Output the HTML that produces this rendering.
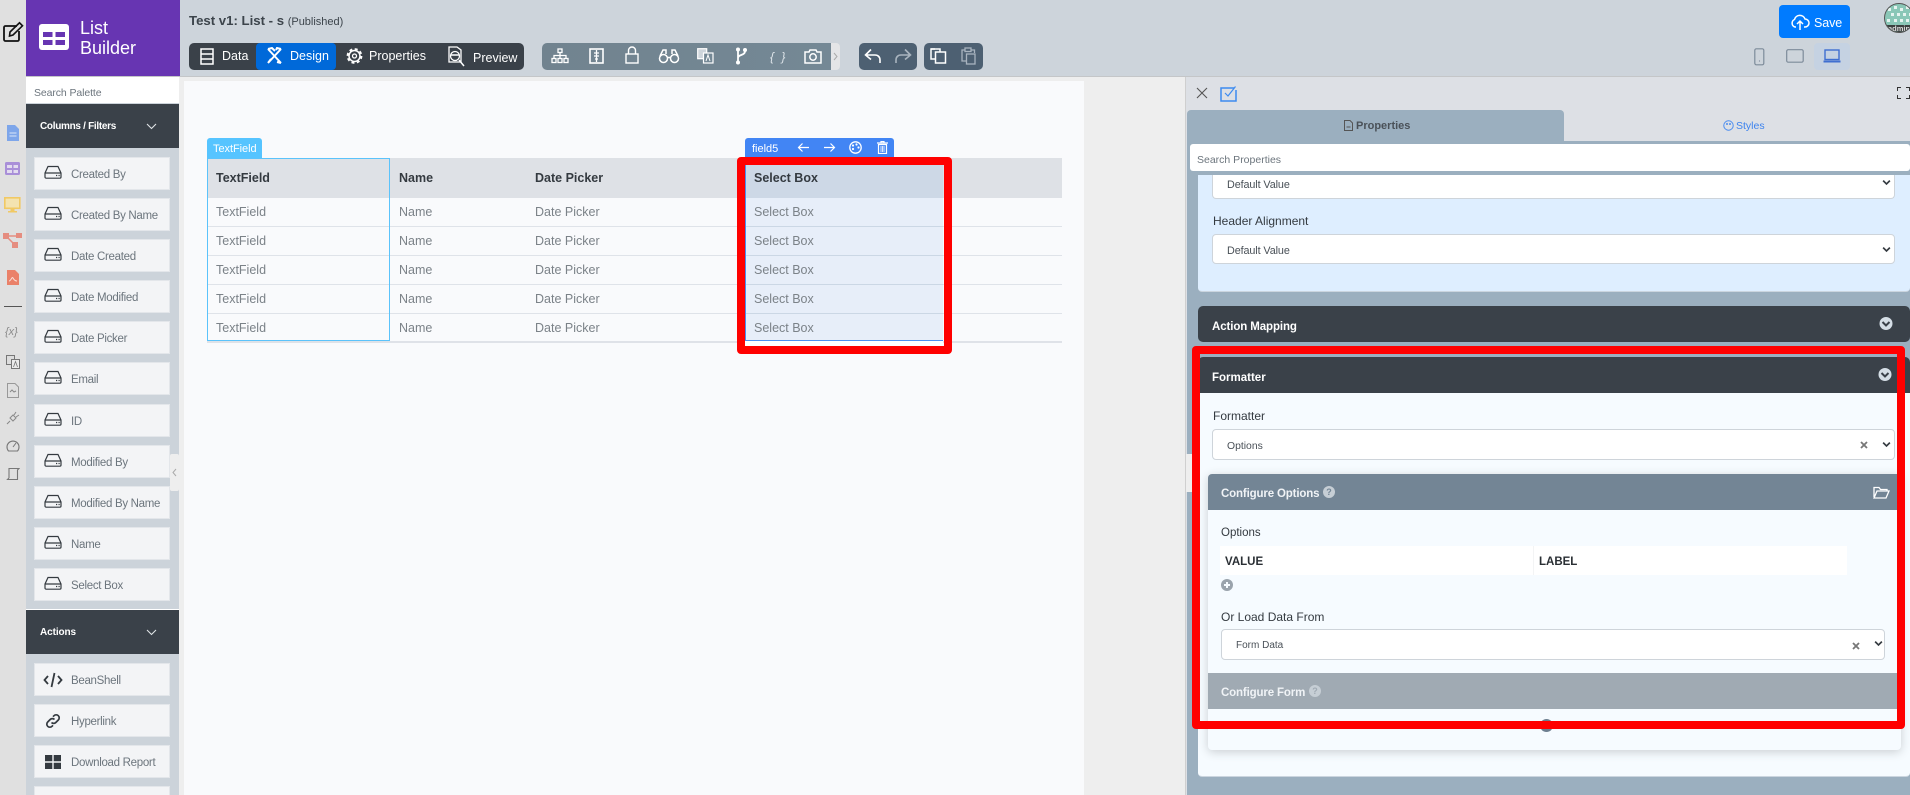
<!DOCTYPE html>
<html><head><meta charset="utf-8"><title>List Builder</title>
<style>
*{box-sizing:border-box}
html,body{margin:0;padding:0;width:1910px;height:795px;overflow:hidden;background:#eee;font-family:"Liberation Sans",sans-serif}
#w{position:relative;width:1910px;height:795px;overflow:hidden;background:#eee}
.a{position:absolute}
.t{position:absolute;white-space:nowrap;line-height:20px;height:20px}
.pi{position:absolute;left:34px;width:136px;height:33px;background:#f3f4f6;border:1px solid #e3e6ea}
.pi span{position:absolute;left:36px;top:8px;font-size:11.5px;letter-spacing:-.3px;line-height:18px;color:#6c757d;white-space:nowrap}
.pi svg{position:absolute;left:9px;top:7px}
.h{font-size:12.5px;font-weight:bold;color:#343a40}
.c{font-size:12.5px;color:#7b8288}
.line{position:absolute;height:1px;background:#dfe3e9}
.sel{position:absolute;background:#fff;border:1px solid #ced4da;border-radius:4px}
.sel span{position:absolute;font-size:10px;color:#495057;white-space:nowrap;line-height:14px}
svg{display:block}
</style></head>
<body>
<div id="w">
<svg width="0" height="0" style="position:absolute"><defs>
<symbol id="drv" viewBox="0 0 18 14"><path d="M1 8 L4 1.5 H14 L17 8 V12 a1.2 1.2 0 0 1-1.2 1.2 H2.2 A1.2 1.2 0 0 1 1 12Z M1 8H17" fill="none" stroke="#343a40" stroke-width="1.2"/><path d="M12 10.5h1.2M14.5 10.5h1.2" stroke="#343a40" stroke-width="1.2"/></symbol>
<symbol id="chv" viewBox="0 0 12 8"><path d="M1.5 1.5 L6 6 L10.5 1.5" fill="none" stroke="#343a40" stroke-width="2.2"/></symbol>
</defs></svg>

<!-- left rail -->
<div class="a" style="left:0;top:0;width:26px;height:795px;background:#e0e0e0"></div>
<svg class="a" style="left:2px;top:21px" width="22" height="22" viewBox="0 0 22 22"><path d="M15 5H3.5A1.5 1.5 0 0 0 2 6.5V18.5A1.5 1.5 0 0 0 3.5 20H15.5A1.5 1.5 0 0 0 17 18.5V10" fill="none" stroke="#111" stroke-width="1.8"/><path d="M8 11 L17.5 1.8 L20.5 4.8 L11 14 L7.5 15Z" fill="none" stroke="#111" stroke-width="1.6"/></svg>
<svg class="a" style="left:6px;top:125px" width="14" height="16" viewBox="0 0 14 16"><path d="M1 0H9L13 4V16H1Z" fill="#7ea6ea"/><path d="M3.5 8H10.5M3.5 11H10.5" stroke="#dbe6f8"/></svg>
<svg class="a" style="left:5px;top:162px" width="15" height="14" viewBox="0 0 15 14"><rect width="15" height="13" rx="1.5" fill="#a98fd8"/><path d="M2 3H7V6H2ZM8.5 3H13V6H8.5ZM2 8H7V11H2ZM8.5 8H13V11H8.5Z" fill="#e3dcef"/></svg>
<svg class="a" style="left:4px;top:197px" width="17" height="16" viewBox="0 0 17 16"><rect x=".8" y=".8" width="15" height="10.5" fill="#f4e3b0" stroke="#f1c964" stroke-width="1.6"/><path d="M6.5 12H10.5V14H13V15.5H4V14H6.5Z" fill="#f1c964"/></svg>
<svg class="a" style="left:3px;top:232px" width="19" height="17" viewBox="0 0 19 17"><path d="M3 4H15M4 5L11 12" stroke="#e58d80" stroke-width="1.5"/><rect x="0" y="1" width="6" height="6" fill="#e58d80"/><rect x="13" y="1" width="6" height="5" fill="#e58d80"/><rect x="9" y="10" width="6" height="6" fill="#e58d80"/></svg>
<svg class="a" style="left:7px;top:270px" width="12" height="15" viewBox="0 0 12 15"><path d="M0 0H8L12 4V15H0Z" fill="#ea8169"/><path d="M2 11 C4 11 5 6 6 8 C7 10 8 11 10 11" stroke="#fbe0d8" fill="none"/></svg>
<div class="a" style="left:4px;top:306px;width:18px;height:1px;background:#555"></div>
<div class="t" style="left:5px;top:322px;font-size:11px;font-style:italic;color:#8a8a8a">{x}</div>
<svg class="a" style="left:6px;top:355px" width="14" height="14" viewBox="0 0 14 14"><rect x=".5" y=".5" width="8" height="9" fill="#ddd" stroke="#777"/><rect x="5.5" y="4.5" width="8" height="9" fill="#ececec" stroke="#777"/><path d="M7.5 12L9.5 6.500L11.5 12" stroke="#777" fill="none" stroke-width=".8"/></svg>
<svg class="a" style="left:7px;top:383px" width="12" height="15" viewBox="0 0 12 15"><path d="M.5.5H8L11.5 4V14.5H.5Z" fill="none" stroke="#999"/><path d="M3 9L5 7L7 9L9 8" stroke="#888" fill="none"/></svg>
<svg class="a" style="left:6px;top:411px" width="14" height="14" viewBox="0 0 14 14"><path d="M1 13L4 10M4 7L7 10L10 7L7 4ZM8 4L10 1M10 6L13 4" stroke="#888" fill="none"/></svg>
<svg class="a" style="left:6px;top:439px" width="14" height="13" viewBox="0 0 14 13"><path d="M2.5 12A6 6 0 1 1 11.5 12Z" fill="none" stroke="#777" stroke-width="1.1"/><path d="M7 8L10 4" stroke="#777"/></svg>
<svg class="a" style="left:6px;top:467px" width="14" height="14" viewBox="0 0 14 14"><path d="M3 11V1.5H13L11.5 3V12.5H1.5L3 11" fill="none" stroke="#777" stroke-width="1.1"/></svg>

<!-- topbar -->
<div class="a" style="left:26px;top:0;width:1884px;height:77px;background:#cdd4db;border-bottom:1px solid #c4c6c8"></div>
<div class="a" style="left:26px;top:0;width:154px;height:76px;background:#6735b2"></div>
<svg class="a" style="left:39px;top:24px" width="30" height="26" viewBox="0 0 30 26"><rect width="30" height="26" rx="3" fill="#fff"/><path d="M4 8H13.5V13H4ZM16.5 8H26V13H16.5ZM4 16H13.5V21H4ZM16.5 16H26V21H16.5Z" fill="#6735b2"/></svg>
<div class="t" style="left:80px;top:18px;font-size:18px;color:#fff">List</div>
<div class="t" style="left:80px;top:38px;font-size:18px;color:#fff">Builder</div>

<div class="t" style="left:189px;top:11px;font-size:13.2px;font-weight:bold;color:#3c444b">Test v1: List - s <span style="font-weight:normal;font-size:11px">(Published)</span></div>

<div class="a" style="left:189px;top:43px;width:335px;height:27px;background:#3a4149;border-radius:5px"></div>
<div class="a" style="left:256px;top:43px;width:80px;height:27px;background:#0069d9;border-radius:4px"></div>
<svg class="a" style="left:200px;top:48px" width="14" height="17" viewBox="0 0 14 17"><rect x="1" y="1" width="12" height="15" fill="none" stroke="#fff" stroke-width="1.5"/><path d="M1 6H13M1 11H13" stroke="#fff" stroke-width="1.5"/></svg>
<div class="t" style="left:222px;top:46px;font-size:12.5px;color:#fff">Data</div>
<svg class="a" style="left:266px;top:47px" width="17" height="18" viewBox="0 0 17 18"><path d="M2 2L15 16M15 2L2 16M2 2L6 1L9 4M15 2L11 1L10 3M2 16L5 12M15 16L11 15" fill="none" stroke="#fff" stroke-width="2"/></svg>
<div class="t" style="left:290px;top:46px;font-size:12.5px;color:#fff">Design</div>
<svg class="a" style="left:346px;top:47px" width="17" height="18" viewBox="0 0 17 18"><circle cx="8.5" cy="9" r="5.5" fill="none" stroke="#fff" stroke-width="1.5"/><circle cx="8.5" cy="9" r="2" fill="none" stroke="#fff" stroke-width="1.3"/><circle cx="8.5" cy="9" r="7" fill="none" stroke="#fff" stroke-width="1.8" stroke-dasharray="3 2.5"/></svg>
<div class="t" style="left:369px;top:46px;font-size:12.5px;color:#fff">Properties</div>
<svg class="a" style="left:448px;top:46px" width="18" height="21" viewBox="0 0 18 21"><path d="M1 1H9L13 4V16H1Z" fill="none" stroke="#fff" stroke-width="1.3"/><ellipse cx="7" cy="10" rx="4.5" ry="4.5" fill="none" stroke="#fff" stroke-width="1.3"/><path d="M3 9H11M11 14L16 20" stroke="#fff" stroke-width="1.5"/></svg>
<div class="t" style="left:473px;top:48px;font-size:12.5px;color:#fff">Preview</div>

<div class="a" style="left:542px;top:43px;width:289px;height:27px;background:linear-gradient(90deg,#71838f,#748895);border-radius:5px 0 0 5px"></div>
<div class="a" style="left:831px;top:43px;width:9px;height:27px;background:#e4e5e7;border-radius:0 4px 4px 0"></div>
<svg class="a" style="left:833px;top:52px" width="5" height="9" viewBox="0 0 5 9"><path d="M1 1L4 4.5L1 8" stroke="#aaa" fill="none"/></svg>
<svg class="a" style="left:551px;top:48px" width="18" height="16" viewBox="0 0 18 16"><g fill="none" stroke="#fff" stroke-width="1.3"><rect x="7" y="1" width="4" height="3.5"/><rect x="1" y="10.5" width="4" height="4"/><rect x="7" y="10.5" width="4" height="4"/><rect x="13" y="10.5" width="4" height="4"/><path d="M9 4.5V10.5M3 10.5V7.5H15V10.5"/></g></svg>
<svg class="a" style="left:589px;top:48px" width="15" height="16" viewBox="0 0 15 16"><rect x="1" y="1" width="13" height="14" fill="none" stroke="#fff" stroke-width="1.6"/><path d="M7.5 2V14M5 5H10M5 8H10M6 11H9" stroke="#fff" stroke-width="1.3"/></svg>
<svg class="a" style="left:625px;top:46px" width="14" height="18" viewBox="0 0 14 18"><rect x="1" y="8" width="12" height="9" fill="none" stroke="#fff" stroke-width="1.4"/><path d="M3.5 8V4.5a3.5 3.5 0 0 1 7 0V8" fill="none" stroke="#fff" stroke-width="1.4"/></svg>
<svg class="a" style="left:658px;top:48px" width="22" height="16" viewBox="0 0 22 16"><g fill="none" stroke="#fff" stroke-width="1.5"><circle cx="5.5" cy="10.5" r="4"/><circle cx="16.5" cy="10.5" r="4"/><path d="M9 9.500H13M2 8L5 2H8V6M20 8L17 2H14V6"/></g></svg>
<svg class="a" style="left:697px;top:48px" width="17" height="16" viewBox="0 0 17 16"><rect x=".7" y=".7" width="9" height="10" fill="#cfd6dc" stroke="#fff" stroke-width="1.2"/><rect x="6.5" y="5" width="9.5" height="10" fill="#748895" stroke="#fff" stroke-width="1.2"/><path d="M9 13L11 7L13 13" stroke="#fff" fill="none"/></svg>
<svg class="a" style="left:735px;top:47px" width="13" height="18" viewBox="0 0 13 18"><g fill="none" stroke="#fff" stroke-width="1.8"><path d="M3 3V15M3 11C3 7 10 9 10 4"/></g><circle cx="3" cy="2.5" r="2" fill="#fff"/><circle cx="3" cy="15.5" r="2" fill="#fff"/><circle cx="10" cy="3" r="2" fill="#fff"/></svg>
<div class="t" style="left:770px;top:47px;font-size:12px;font-style:italic;color:#dfe5ea;letter-spacing:2px">{ }</div>
<svg class="a" style="left:804px;top:49px" width="18" height="15" viewBox="0 0 18 15"><path d="M1 3H5L6 1H12L13 3H17V14H1Z" fill="none" stroke="#fff" stroke-width="1.5"/><circle cx="9" cy="8" r="3.2" fill="none" stroke="#fff" stroke-width="1.5"/></svg>

<div class="a" style="left:859px;top:43px;width:58px;height:27px;background:#4d6072;border-radius:5px"></div>
<svg class="a" style="left:864px;top:48px" width="18" height="16" viewBox="0 0 18 16"><path d="M7 1.5L1.5 7L7 11.5M1.5 7H11C14 7 16 9 16 12V15" fill="none" stroke="#fff" stroke-width="1.6"/></svg>
<svg class="a" style="left:894px;top:48px" width="18" height="16" viewBox="0 0 18 16"><path d="M11 1.5L16.5 7L11 11.5M16.5 7H7C4 7 2 9 2 12V15" fill="none" stroke="#a9b4bf" stroke-width="1.6"/></svg>
<div class="a" style="left:924px;top:43px;width:59px;height:27px;background:#4d6072;border-radius:5px"></div>
<svg class="a" style="left:930px;top:48px" width="17" height="16" viewBox="0 0 17 16"><path d="M5 1H1V11H5" fill="none" stroke="#fff" stroke-width="1.5"/><path d="M1 1H10V4" fill="none" stroke="#fff" stroke-width="1.5"/><rect x="5.5" y="4" width="10" height="11" fill="none" stroke="#fff" stroke-width="1.5"/></svg>
<svg class="a" style="left:961px;top:47px" width="15" height="18" viewBox="0 0 15 18"><path d="M4 3H1V14H5M10 3H13.5V6" fill="none" stroke="#a9b4bf" stroke-width="1.3"/><rect x="4" y="1" width="6" height="3.5" fill="none" stroke="#a9b4bf" stroke-width="1.3"/><rect x="5.5" y="7" width="8.5" height="10" fill="none" stroke="#a9b4bf" stroke-width="1.3"/></svg>

<div class="a" style="left:1779px;top:5px;width:71px;height:33px;background:#007bff;border-radius:4px"></div>
<svg class="a" style="left:1790px;top:14px" width="20" height="17" viewBox="0 0 20 17"><path d="M6 13H5A4 4 0 0 1 4.5 5.5 A5.5 5.5 0 0 1 15 5 A4 4 0 0 1 15 13H14M10 16V7M7 10L10 7L13 10" fill="none" stroke="#fff" stroke-width="1.5"/></svg>
<div class="t" style="left:1814px;top:13px;font-size:12.5px;letter-spacing:-.1px;color:#fff">Save</div>
<div class="a" style="left:1884px;top:3px;width:30px;height:30px;border-radius:50%;overflow:hidden;background:#8ac7b7;border:1px solid #555">
<svg class="a" style="left:0;top:0" width="30" height="22" viewBox="0 0 30 22"><path d="M3 4h3v3h-3zM9 2h3v3h-3zM15 4h3v3h-3zM21 2h3v3h-3zM6 9h3v3h-3zM12 9h3v3h-3zM18 9h3v3h-3zM24 9h3v3h-3zM2 15h3v3h-3zM9 15h3v3h-3zM15 15h3v3h-3zM21 15h3v3h-3z" fill="#e6f3ef"/></svg>
<div class="a" style="left:0;top:21px;width:30px;height:9px;background:#3a3f3e"></div>
<div class="t" style="left:3px;top:15px;font-size:7.5px;font-weight:bold;color:#ddd">admin</div>
</div>
<svg class="a" style="left:1754px;top:48px" width="11" height="18" viewBox="0 0 11 18"><rect x=".8" y=".8" width="9" height="16" rx="1.5" fill="none" stroke="#7d8b9a" stroke-width="1.2"/><circle cx="5.5" cy="13" r=".6" fill="#7d8b9a"/></svg>
<svg class="a" style="left:1786px;top:49px" width="18" height="14" viewBox="0 0 18 14"><rect x=".7" y=".7" width="16.5" height="12.5" rx="1.5" fill="none" stroke="#7d8b9a" stroke-width="1.2"/></svg>
<div class="a" style="left:1814px;top:43px;width:36px;height:27px;background:#c5d2e2;border-radius:4px"></div>
<svg class="a" style="left:1823px;top:49px" width="18" height="14" viewBox="0 0 18 14"><rect x="2" y="1" width="14" height="9.5" fill="none" stroke="#3f6fd0" stroke-width="1.4"/><path d="M.5 12.5H17.5" stroke="#3f6fd0" stroke-width="2"/></svg>

<!-- palette -->
<div class="a" style="left:26px;top:77px;width:153px;height:718px;background:#ccd3da"></div>
<div class="a" style="left:26px;top:77px;width:153px;height:26px;background:#fff"></div>
<div class="t" style="left:34px;top:83px;font-size:10.5px;letter-spacing:-.1px;color:#6c757d">Search Palette</div>
<div class="a" style="left:26px;top:104px;width:153px;height:44px;background:#3a4149"></div>
<div class="t" style="left:40px;top:117px;font-size:10px;letter-spacing:-.3px;font-weight:bold;color:#fff">Columns / Filters</div>
<svg class="a" style="left:146px;top:123px" width="11" height="7" viewBox="0 0 11 7"><path d="M1 1L5.5 5.5L10 1" fill="none" stroke="#dfe3e6" stroke-width="1.1"/></svg>

<div class="pi" style="top:157px"><svg width="18" height="14"><use href="#drv"/></svg><span>Created By</span></div>
<div class="pi" style="top:198px"><svg width="18" height="14"><use href="#drv"/></svg><span>Created By Name</span></div>
<div class="pi" style="top:239px"><svg width="18" height="14"><use href="#drv"/></svg><span>Date Created</span></div>
<div class="pi" style="top:280px"><svg width="18" height="14"><use href="#drv"/></svg><span>Date Modified</span></div>
<div class="pi" style="top:321px"><svg width="18" height="14"><use href="#drv"/></svg><span>Date Picker</span></div>
<div class="pi" style="top:362px"><svg width="18" height="14"><use href="#drv"/></svg><span>Email</span></div>
<div class="pi" style="top:404px"><svg width="18" height="14"><use href="#drv"/></svg><span>ID</span></div>
<div class="pi" style="top:445px"><svg width="18" height="14"><use href="#drv"/></svg><span>Modified By</span></div>
<div class="pi" style="top:486px"><svg width="18" height="14"><use href="#drv"/></svg><span>Modified By Name</span></div>
<div class="pi" style="top:527px"><svg width="18" height="14"><use href="#drv"/></svg><span>Name</span></div>
<div class="pi" style="top:568px"><svg width="18" height="14"><use href="#drv"/></svg><span>Select Box</span></div>
<div class="a" style="left:26px;top:609px;width:153px;height:1px;background:#fff"></div>
<div class="a" style="left:26px;top:610px;width:153px;height:44px;background:#3a4149"></div>
<div class="t" style="left:40px;top:623px;font-size:10px;letter-spacing:-.1px;font-weight:bold;color:#fff">Actions</div>
<svg class="a" style="left:146px;top:629px" width="11" height="7" viewBox="0 0 11 7"><path d="M1 1L5.5 5.5L10 1" fill="none" stroke="#dfe3e6" stroke-width="1.1"/></svg>
<div class="pi" style="top:663px"><svg width="20" height="16" viewBox="0 0 20 16" style="left:8px;top:8px"><path d="M5 4L1.5 8L5 12M15 4L18.5 8L15 12M11.5 1L8.5 15" fill="none" stroke="#343a40" stroke-width="1.8"/></svg><span>BeanShell</span></div>
<div class="pi" style="top:704px"><svg width="18" height="16" viewBox="0 0 18 16" style="left:9px;top:8px"><path d="M7.5 9.5a3 3 0 0 0 4.3 0l2.5-2.5a3 3 0 0 0-4.3-4.3l-1 1M10.5 6.5a3 3 0 0 0-4.3 0L3.700 9a3 3 0 0 0 4.3 4.3l1-1" fill="none" stroke="#343a40" stroke-width="1.7"/></svg><span>Hyperlink</span></div>
<div class="pi" style="top:745px"><svg width="16" height="14" viewBox="0 0 16 14" style="left:10px;top:9px"><path d="M0 0H7.3V6.3H0ZM8.7 0H16V6.3H8.7ZM0 7.7H7.3V14H0ZM8.7 7.7H16V14H8.7Z" fill="#343a40"/></svg><span>Download Report</span></div>
<div class="pi" style="top:786px"></div>
<div class="a" style="left:170px;top:454px;width:9px;height:37px;background:#eee;border-radius:2px"></div>
<svg class="a" style="left:172px;top:468px" width="5" height="9" viewBox="0 0 5 9"><path d="M4 1L1 4.5L4 8" stroke="#aaa" fill="none"/></svg>

<!-- canvas -->
<div class="a" style="left:184px;top:81px;width:900px;height:714px;background:#f9fafc"></div>
<div class="a" style="left:207px;top:158px;width:855px;height:40px;background:#dee1e6"></div>
<div class="line" style="left:207px;top:226px;width:855px"></div>
<div class="line" style="left:207px;top:255px;width:855px"></div>
<div class="line" style="left:207px;top:284px;width:855px"></div>
<div class="line" style="left:207px;top:313px;width:855px"></div>
<div class="a" style="left:207px;top:341px;width:855px;height:2px;background:#dfe2e8"></div>

<!-- selected col -->
<div class="a" style="left:745px;top:158px;width:198px;height:40px;background:#cdd8e6"></div>
<div class="a" style="left:745px;top:198px;width:198px;height:142px;background:#e7eef9"></div>
<div class="a" style="left:745px;top:226px;width:198px;height:1px;background:#cbd7e5"></div>
<div class="a" style="left:745px;top:255px;width:198px;height:1px;background:#cbd7e5"></div>
<div class="a" style="left:745px;top:284px;width:198px;height:1px;background:#cbd7e5"></div>
<div class="a" style="left:745px;top:313px;width:198px;height:1px;background:#cbd7e5"></div>
<div class="a" style="left:745px;top:158px;width:1px;height:183px;background:#4a8ff0"></div>
<div class="a" style="left:745px;top:340px;width:198px;height:1px;background:#4a8ff0"></div>
<div class="a" style="left:745px;top:341px;width:198px;height:6px;background:#fff"></div>

<!-- texts -->
<div class="t h" style="left:216px;top:168px">TextField</div>
<div class="t h" style="left:399px;top:168px">Name</div>
<div class="t h" style="left:535px;top:168px">Date Picker</div>
<div class="t h" style="left:754px;top:168px">Select Box</div>
<div class="t c" style="left:216px;top:202px">TextField</div><div class="t c" style="left:399px;top:202px">Name</div><div class="t c" style="left:535px;top:202px">Date Picker</div><div class="t c" style="left:754px;top:202px">Select Box</div>
<div class="t c" style="left:216px;top:231px">TextField</div><div class="t c" style="left:399px;top:231px">Name</div><div class="t c" style="left:535px;top:231px">Date Picker</div><div class="t c" style="left:754px;top:231px">Select Box</div>
<div class="t c" style="left:216px;top:260px">TextField</div><div class="t c" style="left:399px;top:260px">Name</div><div class="t c" style="left:535px;top:260px">Date Picker</div><div class="t c" style="left:754px;top:260px">Select Box</div>
<div class="t c" style="left:216px;top:289px">TextField</div><div class="t c" style="left:399px;top:289px">Name</div><div class="t c" style="left:535px;top:289px">Date Picker</div><div class="t c" style="left:754px;top:289px">Select Box</div>
<div class="t c" style="left:216px;top:318px">TextField</div><div class="t c" style="left:399px;top:318px">Name</div><div class="t c" style="left:535px;top:318px">Date Picker</div><div class="t c" style="left:754px;top:318px">Select Box</div>

<div class="a" style="left:207px;top:158px;width:183px;height:183px;border:1px solid #5bc3fb"></div>
<div class="a" style="left:207px;top:138px;width:55px;height:20px;background:#56c4ff;border-radius:3px 3px 0 0"></div>
<div class="t" style="left:213px;top:139px;font-size:11px;letter-spacing:-.05px;color:#fff">TextField</div>

<div class="a" style="left:745px;top:138px;width:149px;height:19px;background:#4285f4;border-radius:3px 3px 0 0"></div>
<div class="t" style="left:752px;top:139px;font-size:11px;color:#fff">field5</div>
<svg class="a" style="left:797px;top:142px" width="13" height="11" viewBox="0 0 13 11"><path d="M12 5.5H1.5M5.5 1.5L1.5 5.5L5.5 9.5" fill="none" stroke="#fff" stroke-width="1.2"/></svg>
<svg class="a" style="left:823px;top:142px" width="13" height="11" viewBox="0 0 13 11"><path d="M1 5.5H11.5M7.5 1.5L11.5 5.5L7.5 9.5" fill="none" stroke="#fff" stroke-width="1.2"/></svg>
<svg class="a" style="left:849px;top:141px" width="13" height="13" viewBox="0 0 13 13"><circle cx="6.5" cy="6.5" r="5.7" fill="none" stroke="#fff" stroke-width="1.3"/><circle cx="4" cy="4.5" r="1.1" fill="#fff"/><circle cx="7.5" cy="3.5" r="1.1" fill="#fff"/><circle cx="9.5" cy="6.5" r="1.1" fill="#fff"/><circle cx="4" cy="8" r="1.1" fill="#fff"/></svg>
<svg class="a" style="left:877px;top:141px" width="11" height="13" viewBox="0 0 11 13"><path d="M0 2H11M4 2V.5H7V2M1.5 3.5H9.500V12.5H1.5Z" fill="none" stroke="#fff" stroke-width="1.2"/><path d="M4 5V11M5.5 5V11M7 5V11" stroke="#fff" stroke-width=".8"/></svg>

<!-- right panel -->
<div class="a" style="left:1185px;top:77px;width:725px;height:718px;background:#dde0e5;border-left:1px solid #cfcfcf"></div>
<svg class="a" style="left:1196px;top:87px" width="12" height="12" viewBox="0 0 12 12"><path d="M1 1L11 11M11 1L1 11" stroke="#555" stroke-width="1.1"/></svg>
<svg class="a" style="left:1220px;top:85px" width="17" height="17" viewBox="0 0 17 17"><path d="M14 3H1V16H16V5" fill="none" stroke="#3d8bf0" stroke-width="1.5"/><path d="M5 8L8 11L15.5 1.5" fill="none" stroke="#3d8bf0" stroke-width="1.2"/></svg>
<svg class="a" style="left:1897px;top:87px" width="13" height="12" viewBox="0 0 13 12"><path d="M.5 4V.5H4M9 .5H12.5V4M.5 8V11.5H4M9 11.5H12.5V8" fill="none" stroke="#333" stroke-width="1"/></svg>

<div class="a" style="left:1187px;top:110px;width:377px;height:31px;background:#9bafbf;border-radius:4px 4px 0 0"></div>
<div class="a" style="left:1187px;top:141px;width:723px;height:654px;background:#9bafbf"></div>
<svg class="a" style="left:1344px;top:120px" width="9" height="11" viewBox="0 0 9 11"><path d="M.5.5H6L8.5 3V10.5H.5Z" fill="none" stroke="#555"/><path d="M2.5 7H6.5" stroke="#555"/></svg>
<div class="t" style="left:1356px;top:116px;font-size:11px;font-weight:bold;color:#4a5158">Properties</div>
<svg class="a" style="left:1723px;top:120px" width="11" height="11" viewBox="0 0 11 11"><circle cx="5.5" cy="5.5" r="4.7" fill="none" stroke="#4b8df0"/><circle cx="4" cy="4" r="1" fill="#4b8df0"/><circle cx="7" cy="4" r="1" fill="#4b8df0"/></svg>
<div class="t" style="left:1736px;top:116px;font-size:10.5px;color:#3d83ee">Styles</div>

<!-- light card 1 -->
<div class="a" style="left:1198px;top:175px;width:712px;height:117px;background:#deeeff;border-bottom:1px solid #cbd5df;border-radius:0 0 4px 4px"></div>
<div class="sel" style="left:1212px;top:170px;width:683px;height:29px;border-top:none;border-radius:0 0 4px 4px"><span style="left:14px;top:8px;font-size:10.8px;letter-spacing:-.1px">Default Value</span><svg style="position:absolute;left:669px;top:9px" width="9" height="7"><use href="#chv"/></svg></div>
<div class="t" style="left:1213px;top:211px;font-size:12px;color:#343a40">Header Alignment</div>
<div class="sel" style="left:1212px;top:234px;width:683px;height:30px"><span style="left:14px;top:9px;font-size:10.8px;letter-spacing:-.1px">Default Value</span><svg style="position:absolute;left:669px;top:11px" width="9" height="7"><use href="#chv"/></svg></div>
<div class="a" style="left:1187px;top:171px;width:723px;height:4px;background:#9bafbf"></div>
<div class="a" style="left:1190px;top:144px;width:720px;height:27px;background:#fff;border-radius:3px"></div>
<div class="t" style="left:1197px;top:150px;font-size:10.5px;color:#6c757d">Search Properties</div>

<div class="a" style="left:1198px;top:306px;width:712px;height:36px;background:#3a4149;border-radius:5px"></div>
<div class="t" style="left:1212px;top:317px;font-size:11.5px;letter-spacing:-.1px;font-weight:bold;color:#fff">Action Mapping</div>
<svg class="a" style="left:1879px;top:317px" width="14" height="13" viewBox="0 0 14 13"><ellipse cx="7" cy="6.5" rx="6.5" ry="6.5" fill="#d5dee6"/><path d="M3.5 5L7 8.5L10.5 5" fill="none" stroke="#3a4149" stroke-width="2"/></svg>

<div class="a" style="left:1198px;top:393px;width:712px;height:384px;background:#f6fbff;border-bottom:1px solid #cbd5df;border-radius:0 0 4px 4px"></div>
<div class="a" style="left:1198px;top:357px;width:712px;height:36px;background:#3a4149;border-radius:5px 5px 0 0"></div>
<div class="t" style="left:1212px;top:368px;font-size:11.5px;font-weight:bold;color:#fff">Formatter</div>
<svg class="a" style="left:1878px;top:368px" width="14" height="13" viewBox="0 0 14 13"><ellipse cx="7" cy="6.5" rx="6.5" ry="6.5" fill="#d5dee6"/><path d="M3.5 5L7 8.5L10.5 5" fill="none" stroke="#3a4149" stroke-width="2"/></svg>
<div class="t" style="left:1213px;top:406px;font-size:12px;color:#343a40">Formatter</div>
<div class="sel" style="left:1212px;top:429px;width:683px;height:31px"><span style="left:14px;top:10px;font-size:10.4px">Options</span><svg style="position:absolute;left:647px;top:11px" width="8" height="8" viewBox="0 0 8 8"><path d="M1 1L7 7M7 1L1 7" stroke="#777" stroke-width="1.8"/></svg><svg style="position:absolute;left:669px;top:11px" width="9" height="7"><use href="#chv"/></svg></div>

<div class="a" style="left:1208px;top:474px;width:693px;height:276px;background:#f6fbff;border-radius:4px;box-shadow:0 2px 10px rgba(0,0,0,.18)"></div>
<div class="a" style="left:1208px;top:474px;width:693px;height:36px;background:#738595;border-radius:4px 4px 0 0"></div>
<div class="t" style="left:1221px;top:484px;font-size:11.5px;letter-spacing:-.15px;font-weight:bold;color:#f0f3f6">Configure Options</div>
<div class="a" style="left:1323px;top:486px;width:12px;height:12px;border-radius:50%;background:#c6ced5;color:#738595;font-size:9px;font-weight:bold;line-height:12px;text-align:center">?</div>
<svg class="a" style="left:1873px;top:486px" width="17" height="13" viewBox="0 0 17 13"><path d="M1 11V1.5H6L7.5 3.5H14V5M1 12L4 5H16L13 12Z" fill="none" stroke="#fff" stroke-width="1.3"/></svg>
<div class="t" style="left:1221px;top:523px;font-size:11.5px;color:#343a40">Options</div>
<div class="a" style="left:1220px;top:546px;width:627px;height:29px;background:#fff"></div>
<div class="a" style="left:1533px;top:546px;width:1px;height:29px;background:#f3f4f5"></div>
<div class="t" style="left:1225px;top:552px;font-size:11.5px;font-weight:bold;color:#2a2f34">VALUE</div>
<div class="t" style="left:1539px;top:552px;font-size:11.5px;font-weight:bold;color:#2a2f34">LABEL</div>
<div class="a" style="left:1221px;top:579px;width:12px;height:12px;border-radius:50%;background:#9aa3ac"></div>
<div class="a" style="left:1224px;top:584px;width:6px;height:2px;background:#f6fbff"></div>
<div class="a" style="left:1226px;top:582px;width:2px;height:6px;background:#f6fbff"></div>
<div class="t" style="left:1221px;top:607px;font-size:12px;color:#343a40">Or Load Data From</div>
<div class="sel" style="left:1221px;top:629px;width:664px;height:31px"><span style="left:14px;top:9px">Form Data</span><svg style="position:absolute;left:630px;top:12px" width="8" height="8" viewBox="0 0 8 8"><path d="M1 1L7 7M7 1L1 7" stroke="#777" stroke-width="1.8"/></svg><svg style="position:absolute;left:652px;top:10px" width="9" height="7"><use href="#chv"/></svg></div>
<div class="a" style="left:1208px;top:673px;width:693px;height:36px;background:#a0aab3"></div>
<div class="t" style="left:1221px;top:683px;font-size:11.5px;letter-spacing:-.15px;font-weight:bold;color:#f0f3f6">Configure Form</div>
<div class="a" style="left:1309px;top:685px;width:12px;height:12px;border-radius:50%;background:#c6ced5;color:#a0aab3;font-size:9px;font-weight:bold;line-height:12px;text-align:center">?</div>
<div class="a" style="left:1540px;top:719px;width:13px;height:13px;border-radius:50%;background:#6d7f90"></div>

<div class="a" style="left:1186px;top:454px;width:6px;height:38px;background:#eee"></div>

<!-- red annotations -->
<div class="a" style="left:737px;top:157px;width:215px;height:197px;border:8px solid #f00;border-radius:4px"></div>
<div class="a" style="left:1192px;top:346px;width:713px;height:383px;border:8px solid #f00;border-radius:4px"></div>
</div>
</body></html>
